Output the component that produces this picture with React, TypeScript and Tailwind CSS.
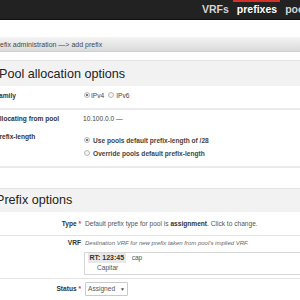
import React from "react";

function Radio({ checked }: { checked?: boolean }) {
  return (
    <span className="relative inline-block w-[6px] h-[6px] rounded-full border border-[#b8b8b8] bg-[#f3f3f3] shrink-0">
      {checked && <span className="absolute inset-[1px] rounded-full bg-[#505050]" />}
    </span>
  );
}

export default function App() {
  return (
    <div className="w-[300px] h-[300px] overflow-hidden bg-white text-[#333] font-['Liberation_Sans',Arial,sans-serif]">
      {/* top nav */}
      <div className="relative h-[20px] bg-[#222] overflow-hidden whitespace-nowrap border-b border-[#111]">
        <div className="absolute left-[233px] top-0 w-[47px] h-[2px] bg-[#d42f2b]" />
        <div className="flex h-full items-center pl-[198px] text-[10.5px] font-bold leading-none">
          <span className="px-[4px] text-[#d4d4d4]">VRFs</span>
          <span className="px-[4px] text-white">prefixes</span>
          <span className="px-[4px] text-[#d4d4d4]">pools</span>
        </div>
      </div>

      {/* breadcrumb */}
      <div className="mt-[17px] h-[15px] flex items-center bg-gradient-to-b from-[#f4f4f4] to-[#dadada] border-b border-[#d0d0d0] whitespace-nowrap overflow-hidden">
        <span className="ml-[-7px] text-[7px] leading-none text-[#484848]">Prefix administration —&gt; add prefix</span>
      </div>

      {/* Pool allocation options */}
      <div className="mt-[8px] border-t border-[#e2e2e2]">
        <div className="h-[25px] bg-[#f2f2f2] pt-[7px] whitespace-nowrap">
          <span className="block ml-[-1px] text-[12.6px] leading-[13px] text-[#222]">Pool allocation options</span>
        </div>
        <div className="ml-[-5px] text-[6.6px] leading-[8px] whitespace-nowrap">
          <div className="h-[22px] pb-[2px] flex items-center">
            <div className="w-[88px] font-bold">Family</div>
            <div className="flex items-center">
              <span className="ml-[1px]"><Radio checked /></span>
              <span className="ml-[1px] text-[#444]">IPv4</span>
              <span className="ml-[4px]"><Radio /></span>
              <span className="ml-[2px] text-[#444]">IPv6</span>
            </div>
          </div>
          <div className="h-[2px] bg-[#ebebeb]" />
          <div className="h-[18px] pt-[5px] flex">
            <div className="w-[88px] font-bold">Allocating from pool</div>
            <div className="text-[#444]">10.100.0.0 —</div>
          </div>
          <div className="flex pb-[8px]">
            <div className="w-[88px] pt-[5px] font-bold">Prefix-length</div>
            <div className="pt-[9px] flex flex-col gap-[5px] font-bold text-[#444]">
              <div className="flex items-center">
                <span className="ml-[1px]"><Radio checked /></span>
                <span className="ml-[3px]">Use pools default prefix-length of /28</span>
              </div>
              <div className="flex items-center">
                <span className="ml-[1px]"><Radio /></span>
                <span className="ml-[3px]">Override pools default prefix-length</span>
              </div>
            </div>
          </div>
          <div className="h-[2px] bg-[#ebebeb]" />
        </div>
      </div>

      {/* Prefix options */}
      <div className="mt-[20px] border-t border-[#e2e2e2]">
        <div className="h-[23px] bg-[#f2f2f2] pt-[5px] whitespace-nowrap">
          <span className="block ml-[-4px] text-[12.6px] leading-[13px] text-[#222]">Prefix options</span>
        </div>
        <div className="text-[6.6px] leading-[8px] whitespace-nowrap">
          <div className="h-[23px] flex items-center">
            <div className="w-[81px] text-right font-bold">
              Type <span className="text-[#d33]">*</span>
            </div>
            <div className="ml-[4px] text-[#555]">
              Default prefix type for pool is <span className="font-bold text-[#333]">assignment</span>. Click to change.
            </div>
          </div>
          <div className="h-[1px] bg-[#e4e4e4]" />
          <div className="flex pt-[3px] pb-[3px]">
            <div className="w-[81px] text-right font-bold">VRF</div>
            <div className="ml-[3px] flex-1 flex flex-col">
              <div className="ml-[1px] italic text-[6px] text-[#666]">Destination VRF for new prefix taken from pool's implied VRF.</div>
              <div className="mt-[5px] mr-[-10px] border border-[#d6d6d6] bg-white pb-[1px]">
                <div className="h-[10px] flex items-center">
                  <span className="ml-[3px] h-[10px] px-[1.5px] flex items-center bg-[#e8e8e8] font-bold text-[7px] text-[#333]">RT: 123:45</span>
                  <span className="ml-[6px] text-[#555]">cap</span>
                </div>
                <div className="h-[10px] flex items-center pl-[12px] text-[#555]">Capitar</div>
              </div>
            </div>
          </div>
          <div className="h-[1px] bg-[#e4e4e4]" />
          <div className="pt-[3px] flex items-center h-[17px]">
            <div className="w-[81px] text-right font-bold">
              Status <span className="text-[#d33]">*</span>
            </div>
            <div className="ml-[4px] w-[43px] h-[14px] border border-[#cacaca] rounded-[1px] flex items-center justify-between px-[2px] text-[#555]">
              <span>Assigned</span>
              <span className="text-[5px]">▼</span>
            </div>
          </div>
        </div>
      </div>
    </div>
  );
}
